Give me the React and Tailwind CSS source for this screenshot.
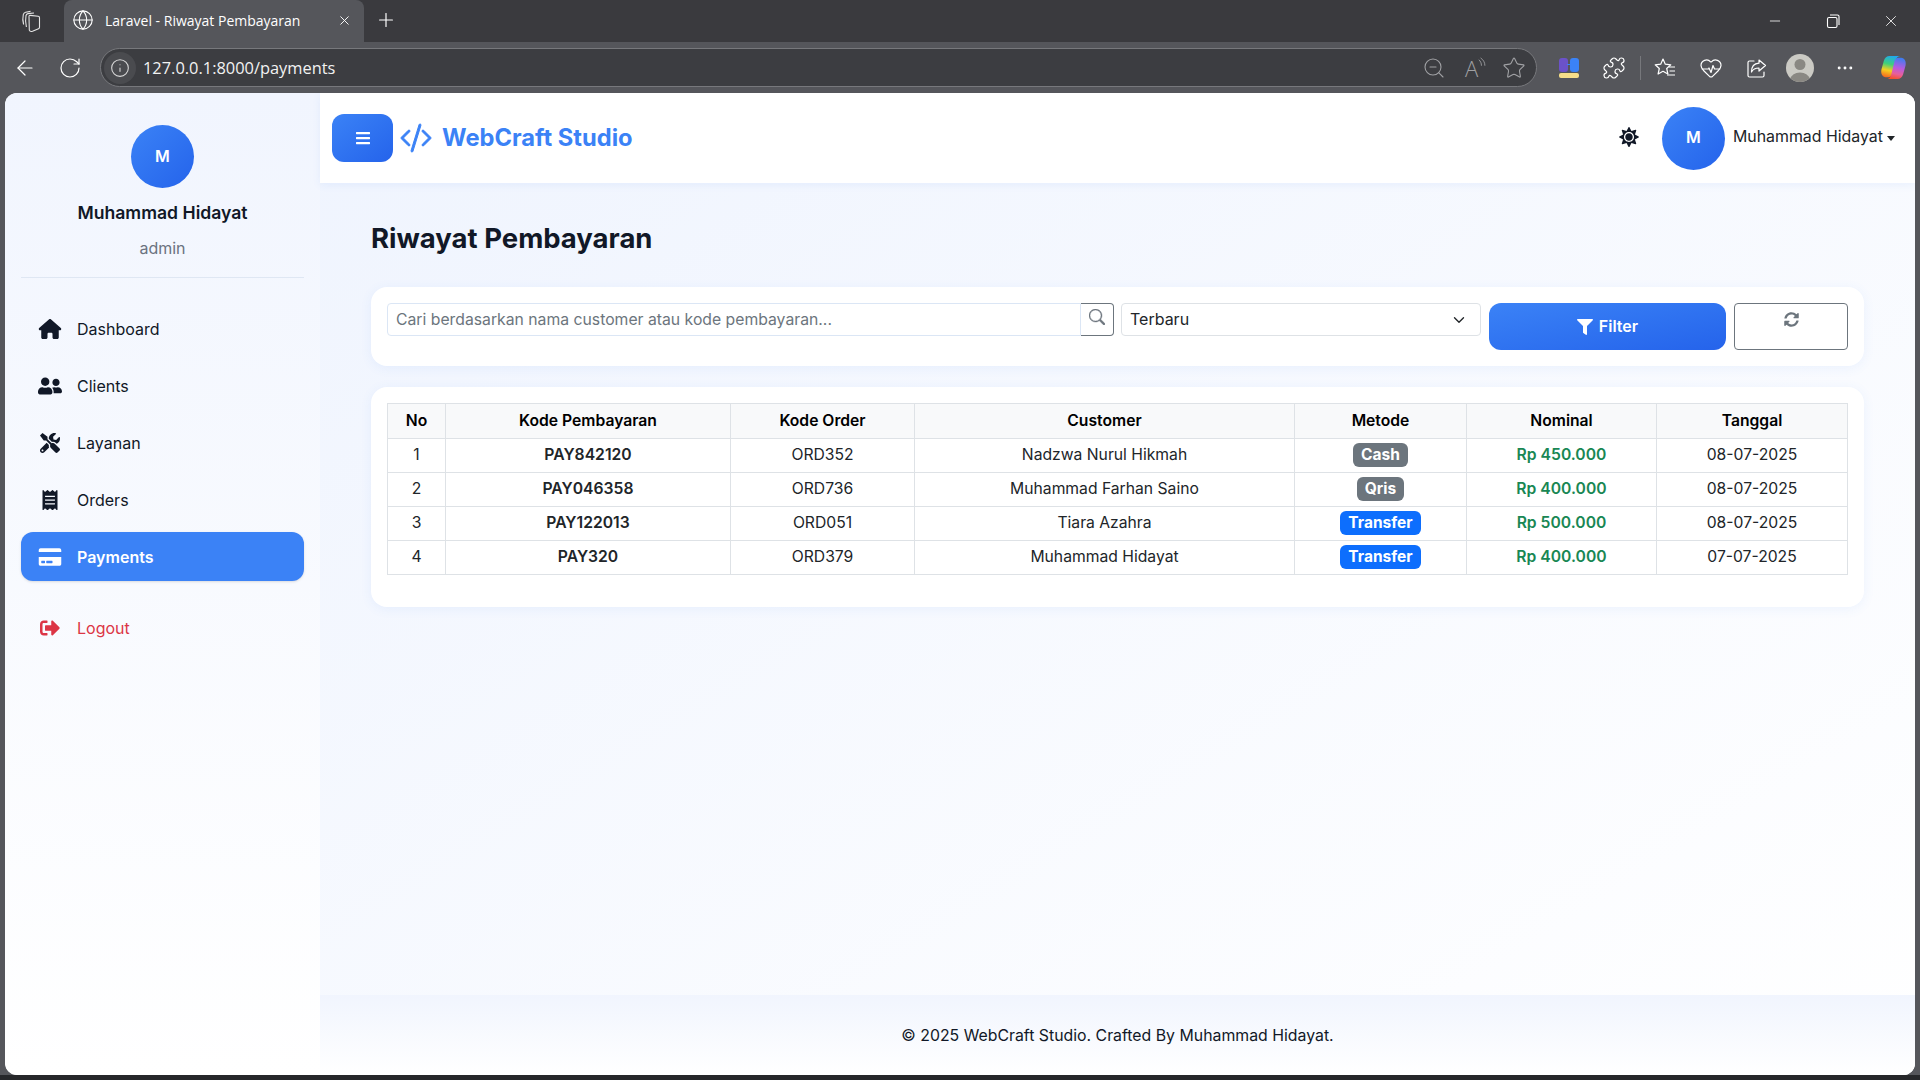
import React from 'react';
import { FaUserFriends, FaTools, FaReceipt, FaCreditCard, FaSignOutAlt, FaBars, FaFilter, FaSun, FaSyncAlt } from 'react-icons/fa';
import { FaHouse } from 'react-icons/fa6';
import { BsCodeSlash, BsSearch } from 'react-icons/bs';
import { Globe, X, Plus, ArrowLeft, RotateCw, Info, ZoomOut, Star, Puzzle, HeartPulse, MoreHorizontal, Minus, ChevronDown } from 'lucide-react';

const inter = 'font-[Inter,sans-serif]';

const navItems = [
  { label: 'Dashboard', icon: FaHouse },
  { label: 'Clients', icon: FaUserFriends },
  { label: 'Layanan', icon: FaTools },
  { label: 'Orders', icon: FaReceipt },
  { label: 'Payments', icon: FaCreditCard, active: true },
];

const payments = [
  { no: 1, kode: 'PAY842120', order: 'ORD352', customer: 'Nadzwa Nurul Hikmah', metode: 'Cash', nominal: 'Rp 450.000', tanggal: '08-07-2025' },
  { no: 2, kode: 'PAY046358', order: 'ORD736', customer: 'Muhammad Farhan Saino', metode: 'Qris', nominal: 'Rp 400.000', tanggal: '08-07-2025' },
  { no: 3, kode: 'PAY122013', order: 'ORD051', customer: 'Tiara Azahra', metode: 'Transfer', nominal: 'Rp 500.000', tanggal: '08-07-2025' },
  { no: 4, kode: 'PAY320', order: 'ORD379', customer: 'Muhammad Hidayat', metode: 'Transfer', nominal: 'Rp 400.000', tanggal: '07-07-2025' },
];

const headers = ['No', 'Kode Pembayaran', 'Kode Order', 'Customer', 'Metode', 'Nominal', 'Tanggal'];

function BrowserBar() {
  return (
    <div className="font-['Open_Sans',sans-serif] text-white">
      <div className="flex h-[42px] items-end bg-[#3a3a3e]">
        <div className="flex h-[42px] w-[64px] items-center justify-center pr-[3px]">
          <svg width="24" height="24" viewBox="0 0 24 24" fill="none" stroke="#e4e4e4" strokeWidth="1.1" strokeLinejoin="round">
            <path d="M10 7.5q0-1.2 1.2-1.1l8 .9q1.3.2 1.3 1.4v9.6q0 1-1 1.4l-6 2.6q-2.5.8-3.2-1.2z" />
            <path d="M7.4 18Q6 12 7 6.5 7.4 4.8 9 4.6l6-.6" />
            <path d="M4.6 15.5Q3.2 10.5 4.3 5.5 4.7 3.6 6.6 3.2L11.5 2.4" />
          </svg>
        </div>
        <div className="flex h-[42px] w-[300px] items-center rounded-t-lg bg-[#55565b] pb-[2px] pl-[8px] pr-[12px]">
          <Globe size={22} strokeWidth={1.2} />
          <span className="ml-[11px] flex-1 text-[14px]">Laravel - Riwayat Pembayaran</span>
          <X size={15} strokeWidth={1.5} />
        </div>
        <div className="ml-[2px] flex h-[42px] w-[40px] items-center justify-center pb-[2px]">
          <Plus size={22} strokeWidth={1.3} />
        </div>
        <div className="flex h-[42px] flex-1 items-center justify-end">
          <Minus size={16} strokeWidth={1.2} className="mr-[42px]" />
          <svg width="16" height="16" viewBox="0 0 16 16" fill="none" stroke="currentColor" strokeWidth="1.1" className="mr-[41px]">
            <rect x="2.5" y="4.5" width="9.5" height="10" rx="1.5" />
            <path d="M5 2h7.5A1.5 1.5 0 0 1 14 3.5V12" />
          </svg>
          <X size={18} strokeWidth={1.1} className="mr-[20px]" />
        </div>
      </div>
      <div className="flex h-[51px] items-center bg-[#55565b]">
        <div className="flex w-[100px] items-center pl-[13px]">
          <ArrowLeft size={24} strokeWidth={1.2} />
          <RotateCw size={24} strokeWidth={1.2} className="ml-[21px]" />
        </div>
        <div className="flex h-[39px] w-[1437px] items-center rounded-full border border-[#77787c] bg-[#3c3d41] pl-[3px] pr-[10px]">
          <div className="flex h-[32px] w-[32px] items-center justify-center rounded-full bg-[#4a4b4f]">
            <Info size={20} strokeWidth={1.3} className="text-[#d8d8d8]" />
          </div>
          <span className="ml-[7px] flex-1 pt-[1px] text-[16.4px] text-[#f2f2f2]">127.0.0.1:8000/payments</span>
          <ZoomOut size={24} strokeWidth={1.1} className="mr-[16px] text-[#a0a1a4]" />
          <span className="mr-[16px] flex w-[24px] items-start pl-[3px] text-[22px] leading-none font-light text-[#a0a1a4]">
            A
            <svg width="9" height="14" viewBox="0 0 9 14" fill="none" stroke="currentColor" strokeWidth="1"><path d="M1 2c2 2 3 4 3 7M3 0c3 2 5 5 5 9" /></svg>
          </span>
          <Star size={24} strokeWidth={1.1} className="text-[#a0a1a4]" />
        </div>
        <svg width="20" height="20" viewBox="0 0 20 20" className="ml-[22px] shrink-0">
          <rect x="0" y="0" width="9" height="14" rx="3" fill="#6b52c8" />
          <rect x="11" y="0" width="9" height="14" rx="3" fill="#3b82f6" />
          <rect x="8" y="6" width="4" height="1" fill="#3b82f6" />
          <rect x="0" y="15" width="20" height="5" rx="2" fill="#f7de8a" />
        </svg>
        <Puzzle size={24} strokeWidth={1.2} className="ml-[23px] shrink-0" />
        <div className="ml-[14px] h-[24px] w-px shrink-0 bg-[#77787c]" />
        <svg width="24" height="24" viewBox="0 0 24 24" fill="none" stroke="currentColor" strokeWidth="1.2" strokeLinejoin="round" className="ml-[12px] shrink-0">
          <path d="M10 3l2.3 5.2 5.5.6-4.1 3.7 1.2 5.5L10 15.3 5.1 18l1.2-5.5L2.2 8.8l5.5-.6z" />
          <path d="M16 11h6M16.5 15h5.5M14 19h8" />
        </svg>
        <HeartPulse size={24} strokeWidth={1.2} className="ml-[22px] shrink-0" />
        <svg width="24" height="24" viewBox="0 0 24 24" fill="none" stroke="currentColor" strokeWidth="1.2" strokeLinejoin="round" strokeLinecap="round" className="ml-[21px] shrink-0">
          <path d="M10 5H5.5A1.5 1.5 0 0 0 4 6.5v13A1.5 1.5 0 0 0 5.5 21h13a1.5 1.5 0 0 0 1.5-1.5V16" />
          <path d="M15 4l6.5 5.500L15 15v-3c-3.500 0-6 1-7.500 4 0-5.500 3-8.500 7.500-8.800z" />
        </svg>
        <div className="ml-[18px] flex h-[28px] w-[28px] shrink-0 items-end justify-center overflow-hidden rounded-full bg-[#cbcac4]">
          <svg width="28" height="28" viewBox="0 0 28 28" fill="#8a8883"><circle cx="14" cy="10.5" r="5.5" /><ellipse cx="14" cy="25" rx="9.5" ry="6.5" /></svg>
        </div>
        <MoreHorizontal size={20} strokeWidth={1.5} className="ml-[21px] shrink-0" />
        <svg width="27" height="27" viewBox="0 0 28 28" className="ml-[25px] shrink-0">
          <defs>
            <linearGradient id="copLeft" x1="0.6" y1="0" x2="0.4" y2="1">
              <stop offset="0" stopColor="#1fa8f0" />
              <stop offset="0.4" stopColor="#3fd07a" />
              <stop offset="0.7" stopColor="#f5d020" />
              <stop offset="1" stopColor="#f5701f" />
            </linearGradient>
            <linearGradient id="copRight" x1="0.6" y1="0" x2="0.4" y2="1">
              <stop offset="0" stopColor="#3f7cf0" />
              <stop offset="0.45" stopColor="#b65be0" />
              <stop offset="0.75" stopColor="#e85f9a" />
              <stop offset="1" stopColor="#f5502a" />
            </linearGradient>
          </defs>
          <path d="M10 2C7 2 5 4 4 7L1.5 16C.5 20 2.5 24 6 24H9C11 24 12.5 22.5 13 20.5L16 8C16.7 5 18 2 21 2Z" fill="url(#copLeft)" />
          <path d="M18 26C21 26 23 24 24 21L26.5 12C27.5 8 25.5 4 22 4H19C17 4 15.5 5.5 15 7.5L12 20C11.3 23 10 26 7 26Z" fill="url(#copRight)" />
        </svg>
      </div>
    </div>
  );
}

function Avatar() {
  return (
    <div className="flex h-[63px] w-[63px] shrink-0 items-center justify-center rounded-full bg-gradient-to-br from-[#3b82f6] to-[#2563eb] pb-[2px] text-base font-semibold text-white">
      M
    </div>
  );
}

function Sidebar() {
  return (
    <aside className="flex w-[315px] shrink-0 flex-col rounded-bl-xl bg-gradient-to-b from-[#f1f5fe] to-white px-4 pt-[32px]">
      <div className="flex flex-col items-center border-b border-[#dfe7f3] pb-[17px]">
        <Avatar />
        <div className="mt-[12px] text-[17.6px] leading-[26px] font-semibold text-[#111827]">Muhammad Hidayat</div>
        <div className="mt-[10px] text-base leading-[24px] text-[#6b7280]">admin</div>
      </div>
      <nav className="mt-[26px] flex flex-col gap-2">
        {navItems.map((item) => {
          const Icon = item.icon;
          return (
            <a
              key={item.label}
              className={`flex h-[49px] items-center rounded-xl pl-[17px] text-base ${item.active ? 'bg-[#3b82f6] font-semibold text-white shadow-sm' : 'text-[#111827]'}`}
            >
              <Icon className="h-[20px] w-[24px]" />
              <span className="ml-[15px]">{item.label}</span>
            </a>
          );
        })}
        <a className="mt-[14px] flex h-[49px] items-center rounded-xl pl-[17px] text-base text-[#dc3545]">
          <FaSignOutAlt className="h-[20px] w-[24px]" />
          <span className="ml-[15px]">Logout</span>
        </a>
      </nav>
    </aside>
  );
}

function Navbar() {
  return (
    <header className="flex h-[90px] shrink-0 items-center bg-white pl-[12px] pr-[20px] shadow-[0_2px_8px_rgba(59,130,246,0.08)]">
      <button className="flex h-[48px] w-[61px] items-center justify-center rounded-xl bg-gradient-to-br from-[#3b82f6] to-[#2563eb] text-white">
        <FaBars className="h-[16px] w-[16px]" />
      </button>
      <BsCodeSlash className="ml-[7px] h-[32px] w-[32px] stroke-[#3b82f6] stroke-[0.5px] text-[#3b82f6]" />
      <span className="ml-[10px] mb-[1px] text-[23.7px] font-bold text-[#3b82f6]">WebCraft Studio</span>
      <FaSun className="mb-[2px] ml-auto h-[20px] w-[20px] text-[#111827]" />
      <div className="ml-[23px]"><Avatar /></div>
      <span className="mb-[2px] ml-[8px] text-[15.9px] text-[#212529]">Muhammad Hidayat</span>
      <span className="ml-[4px] h-0 w-0 border-x-[4px] border-t-[5px] border-x-transparent border-t-[#212529]" />
    </header>
  );
}

function FilterCard() {
  return (
    <div className="mt-[32px] flex h-[79px] items-start gap-2 rounded-2xl bg-white px-4 pt-4 shadow-[0_2px_12px_rgba(59,130,246,0.08)]">
      <div className="flex h-[33px] w-[727px] shrink-0">
        <div className="flex flex-1 items-center rounded-l border border-[#dbe6f5] pl-[8px] text-[15.75px] text-[#6c757d]">
          Cari berdasarkan nama customer atau kode pembayaran...
        </div>
        <div className="flex w-[33px] items-start justify-center rounded-r border border-l-0 border-[#6c757d] pt-[5px] text-[#6c757d]">
          <BsSearch className="h-[16px] w-[16px] stroke-[#6c757d] stroke-[0.4px]" />
        </div>
      </div>
      <div className="-ml-[1px] flex h-[33px] w-[360px] shrink-0 items-center justify-between rounded border border-[#dee2e6] pb-[2px] pl-[8px] pr-[12px] text-base text-[#212529]">
        Terbaru
        <ChevronDown size={18} strokeWidth={1.8} className="mt-[2px]" />
      </div>
      <button className="flex h-[47px] w-[237px] shrink-0 items-center justify-center gap-[6px] rounded-xl bg-gradient-to-br from-[#3b82f6] to-[#2563eb] pb-[2px] text-base font-semibold text-white">
        <FaFilter className="mt-[2px] h-[16px] w-[16px]" />
        Filter
      </button>
      <button className="flex h-[47px] flex-1 items-start justify-center rounded border border-[#6c757d] pt-[8px] text-[#6c757d]">
        <FaSyncAlt className="h-[15px] w-[15px]" />
      </button>
    </div>
  );
}

function MetodeBadge({ metode }) {
  const color = metode === 'Transfer' ? 'bg-[#0d6efd]' : 'bg-[#6c757d]';
  return <span className={`inline-block rounded-md px-[8px] py-[3px] align-middle text-[15.5px] leading-[18px] font-bold text-white ${color}`}>{metode}</span>;
}

function PaymentsTable() {
  const cell = 'border border-[#dee2e6] pb-[2px]';
  return (
    <div className="mt-[21px] rounded-2xl bg-white p-4 pb-[32px] shadow-[0_2px_12px_rgba(59,130,246,0.08)]">
      <table className="w-full table-fixed border-collapse text-center text-[15.7px] text-[#212529]">
        <colgroup>
          <col className="w-[58px]" />
          <col className="w-[285px]" />
          <col className="w-[184px]" />
          <col className="w-[380px]" />
          <col className="w-[172px]" />
          <col className="w-[190px]" />
          <col className="w-[191px]" />
        </colgroup>
        <thead>
          <tr className="h-[35px] bg-[#f8f9fa]">
            {headers.map((h) => (
              <th key={h} className="border border-[#dee2e6] font-semibold text-black">{h}</th>
            ))}
          </tr>
        </thead>
        <tbody>
          {payments.map((p) => (
            <tr key={p.no} className="h-[34px]">
              <td className={cell}>{p.no}</td>
              <td className={`${cell} font-semibold`}>{p.kode}</td>
              <td className={cell}>{p.order}</td>
              <td className={cell}>{p.customer}</td>
              <td className={cell}><MetodeBadge metode={p.metode} /></td>
              <td className={`${cell} font-semibold text-[#198754]`}>{p.nominal}</td>
              <td className={cell}>{p.tanggal}</td>
            </tr>
          ))}
        </tbody>
      </table>
    </div>
  );
}

export default function App() {
  return (
    <div className={`flex h-screen flex-col overflow-hidden bg-[#55565b] ${inter}`}>
      <BrowserBar />
      <div className="mx-[5px] flex min-h-0 flex-1 overflow-hidden rounded-xl bg-white">
        <Sidebar />
        <main className="flex min-w-0 flex-1 flex-col bg-gradient-to-br from-[#eff4fe] to-white">
          <Navbar />
          <div className="flex-1 px-[51px] pt-[38px]">
            <h1 className="text-[27.5px] leading-[34px] font-bold text-[#111827]">Riwayat Pembayaran</h1>
            <FilterCard />
            <PaymentsTable />
          </div>
          <footer className="flex h-[80px] shrink-0 items-center justify-center bg-gradient-to-b from-[#f1f5fe] to-white pt-[1px] text-[15.85px] text-[#111827]">
            © 2025 WebCraft Studio. Crafted By Muhammad Hidayat.
          </footer>
        </main>
      </div>
      <div className="h-[5px] shrink-0 bg-[#26272a]" />
    </div>
  );
}
